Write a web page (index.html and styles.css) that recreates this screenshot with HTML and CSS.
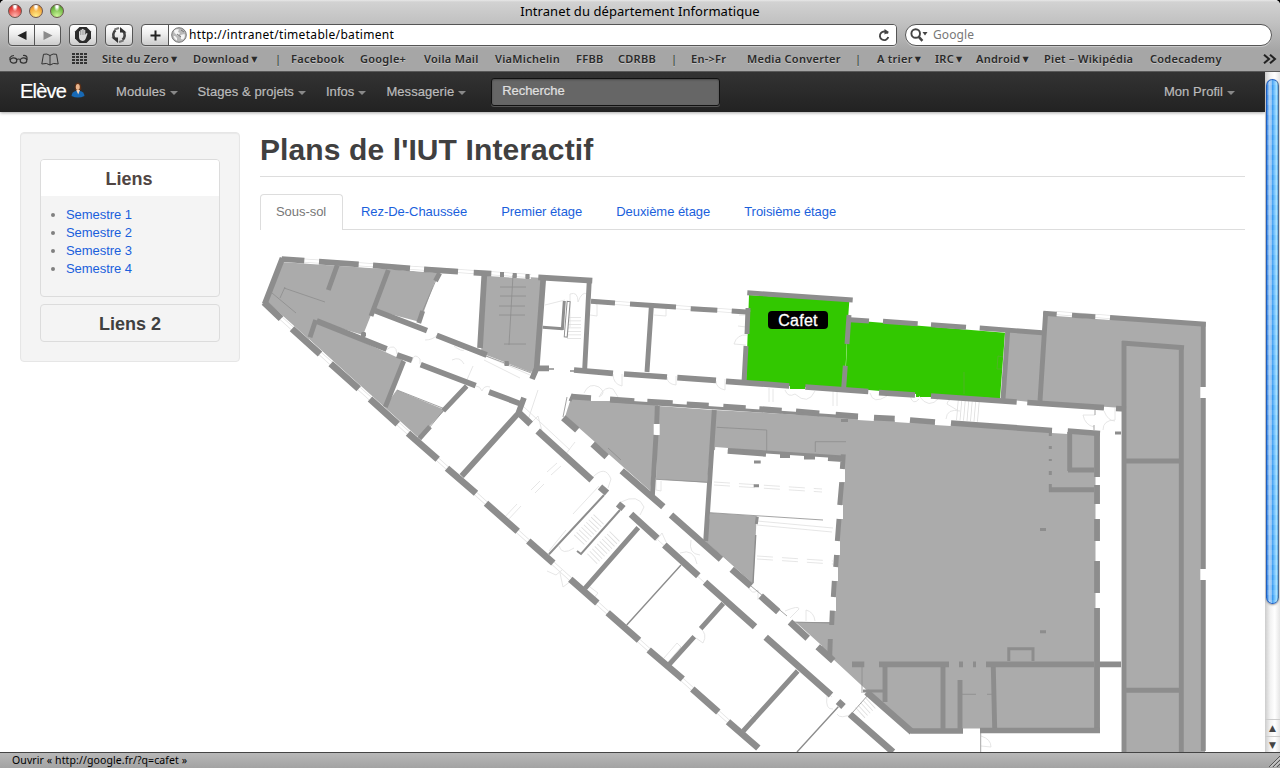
FILE: index.html
```html
<!DOCTYPE html>
<html lang="fr">
<head>
<meta charset="utf-8">
<title>Intranet du département Informatique</title>
<link rel="stylesheet" href="styles.css">
</head>
<body>
<div class="window">
<header class="chrome">
  <div class="titlebar">
    <div class="lights"><i class="light red"></i><i class="light amber"></i><i class="light green"></i></div>
    <div class="title"><span>Intranet du département Informatique</span></div>
  </div>
  <div class="toolbar">
    <div class="btn pair">
      <span><svg width="10" height="9"><path d="M9.500 0V9L0.500 4.500Z" fill="#222"/></svg></span>
      <span class="split"><svg width="10" height="9"><path d="M0.500 0V9L9.500 4.500Z" fill="#8b8b8b"/></svg></span>
    </div>
    <div class="btn single b1"><svg width="18" height="18" viewBox="0 0 18 18"><path d="M5.500 1h7L17 5.500v7L12.500 17h-7L1 12.500v-7z" fill="#2b2b2b"/><path d="M5 9V5.500q.8-1 1.400 0V4q.8-1 1.600 0v-.8q.9-1 1.700 0V4q.9-.8 1.600.2v4.600l1-1.600q1-.4 1.200.5L12 12q-1 3-3.500 3Q5 14.500 5 11z" fill="#d8d8d8"/><path d="M6.500 5v4M8.200 4v5M9.900 4v5" stroke="#777" stroke-width=".5"/></svg></div>
    <div class="btn single b2"><svg width="18" height="18" viewBox="0 0 18 18" fill="none" stroke="#444" stroke-width="2.600"><path d="M5.500 4.200A6 6 0 0 0 4.500 12.500M12.500 13.800A6 6 0 0 0 13.500 5.500"/><path d="M1.500 11.500h6.500v5.500zM16.500 6.500H10V1z" fill="#333" stroke="none"/><path d="M4.500 3.500L9 2M13.500 14.500L9 16" stroke="#777" stroke-width="2"/></svg></div>
    <div class="btn address">
      <span class="plus"><svg width="11" height="11"><path d="M5.500 .5v10M.5 5.500h10" stroke="#222" stroke-width="2"/></svg></span>
      <span class="url">
        <svg width="16" height="16" viewBox="0 0 16 16"><circle cx="8" cy="8" r="7.300" fill="#b9b9b9" stroke="#777"/><path d="M3 3.500q3-2 5-1L7 5l2 1-2 2.500L3.500 6zM9.500 8l4-1q1 3-1.500 5.500L10 12zM4 9l2 2v2.500Q3 12 2.500 9z" fill="#f5f5f5"/><path d="M10 3l3 2M6 7l4 3" stroke="#777"/></svg>
        <span class="urltext">http://intranet/timetable/batiment</span>
        <svg class="reload" width="12" height="13" viewBox="0 0 12 13"><path d="M9.800 4.500A4.300 4.300 0 1 0 10.300 8" fill="none" stroke="#444" stroke-width="1.900"/><path d="M6.500 0v5.500L11 3z" fill="#444"/></svg>
      </span>
    </div>
    <div class="search">
      <svg width="19" height="14" viewBox="0 0 19 14"><circle cx="5.700" cy="5.500" r="4.300" fill="none" stroke="#444" stroke-width="1.900"/><path d="M8.800 8.800l3.600 4" stroke="#444" stroke-width="2.500"/><path d="M12.500 4h5l-2.500 3.500z" fill="#444"/></svg>
      <span>Google</span>
    </div>
  </div>
  <nav class="bookmarks">
    <svg class="glasses" width="20" height="11" viewBox="0 0 20 11" fill="none" stroke="#333" stroke-width="1.200"><ellipse cx="4.500" cy="6.500" rx="3.300" ry="2.600"/><ellipse cx="14.500" cy="6.500" rx="3.300" ry="2.600"/><path d="M7.500 5.500q2-1 4 0M1 6V3.500q1.500-2 4-2M18 6V3.500q-.5-2.500-4-2"/></svg>
    <svg class="book" width="18" height="13" viewBox="0 0 18 13" fill="none" stroke="#333"><path d="M9 2.500Q6 .2 2.500 1.300L.8 11q5-1.600 8.200 1 3.200-2.600 8.200-1L15.500 1.300Q12 .2 9 2.500zV12"/></svg>
    <svg class="grid" width="16" height="12"><path d="M1.500 0v11M5.500 0v11M9.500 0v11M13.500 0v11" stroke="#333" stroke-width="3" stroke-dasharray="2 1"/></svg>
    <ul>
      <li>Site du Zero<b>▼</b></li><li>Download<b>▼</b></li><li class="bar">|</li><li>Facebook</li><li>Google+</li><li>Voila Mail</li><li>ViaMichelin</li><li>FFBB</li><li>CDRBB</li><li class="bar">|</li><li>En-&gt;Fr</li><li>Media Converter</li><li class="bar">|</li><li>A trier<b>▼</b></li><li>IRC<b>▼</b></li><li>Android<b>▼</b></li><li>Piet – Wikipédia</li><li>Codecademy</li>
    </ul>
    <svg class="more" width="14" height="10" viewBox="0 0 14 10" fill="none" stroke="#222" stroke-width="2"><path d="M1 .7L6 5 1 9.300M7 .7L12 5 7 9.300"/></svg>
  </nav>
</header>

<div class="viewport">
<div class="page">
  <nav class="navbar">
    <a class="brand">Elève</a>
    <svg class="avatar" width="14" height="16" viewBox="0 0 14 16"><path d="M4 8Q2.800 1 7 .5 11 1 10.200 8z" fill="#5b3018"/><ellipse cx="6.800" cy="5" rx="2" ry="3" fill="#e9b48c"/><path d="M.5 14Q1 9.500 5 9h4q4 .5 4.500 5Q7 17 .5 14z" fill="#1769b5"/><path d="M5.200 8l2 4.500L9 8z" fill="#f6d4bb"/></svg>
    <ul class="menu"><li>Modules</li><li>Stages &amp; projets</li><li>Infos</li><li>Messagerie</li></ul>
    <div class="query">Recherche</div>
    <ul class="menu right"><li>Mon Profil</li></ul>
  </nav>
  <div class="content">
    <aside class="well">
      <section class="box open"><h3>Liens</h3><ul><li>Semestre 1</li><li>Semestre 2</li><li>Semestre 3</li><li>Semestre 4</li></ul></section>
      <section class="box"><h3>Liens 2</h3></section>
    </aside>
    <main>
      <h1><span>Plans de l'IUT Interactif</span></h1>
      <ul class="tabs"><li class="active">Sous-sol</li><li>Rez-De-Chaussée</li><li>Premier étage</li><li>Deuxième étage</li><li>Troisième étage</li></ul>
      <svg class="plan" width="985" height="504" viewBox="260 248 985 504">
        <!-- closed rooms -->
        <g class="room">
          <path d="M282.700 261L388 269 371 315 363 335 316.700 321 309 340 265 303z"/>
          <path d="M388 269L438 273 420 322 375 310z"/>
          <path d="M316.700 321L403 360 385 409 309 339z"/>
          <path d="M396.700 390L445 410 419 437 408 433 384 408z"/>
          <path d="M486 274L542 278 536 371 530 372 481 353z"/>
          <path d="M571 398L658 405 650 495 565 417z"/>
          <path d="M658 406L713 410 707.300 482.700 656 479.300z"/>
          <path d="M714 410L858 418 1052 431 1100 434V733H913L793 622H831.700L843 457 714 450z"/>
          <path d="M710 512.700L756.700 516 753.300 584 706 542z"/>
          <path d="M1007 331L1043 334 1040 403 1003 399z"/>
          <path d="M1044 312L1205 324V752H1122V408L1038 402z"/>
        </g>
        <!-- window openings -->
        <path class="gap" d="M281 259L531 276M263 302L430 452M591 301.300L750 312.300M1056 313L1110 317M563 417.700L664 507M671 515L751 586 820 648M1203.300 387V398M1203.300 569V580M1098.500 477V485M1098.500 504V519M1098.500 541V561M1098.500 593V608M656.700 424V435M842 469V482M840 505V519M837 541V555M835 567V581M833 597V611M591 398H610M858 417L874 418M895 419L910 420M935 422L951 423M1052 430L1068 431M963 731.500H980M715 450L728 451M766 456H780M790 457H804M815 458H828"/>
        <g class="cafet"><path d="M749 295L849.300 301 848 320 844.500 388 805 387V389H790V386L746 382z"/><path d="M848 320L1005 332.700 1000 398.500 931 395V397H916V394L845 388z"/></g>
        <path class="casing" d="M281 259L531 276M263 302L758 748M591 301.300L750 312.300M1056 313L1110 317"/>
        <path class="clear" d="M281 259L531 276M263 302L758 748M591 301.300L750 312.300M1056 313L1110 317"/>
        <!-- doors, stairs and fittings -->
        <g class="faint">
          <path d="M524 407L570 450M575 442L565 455 550 440M658 540L705 583M723 597L755 626M765 637L832 697M538 390L528 420M473 366L466 382M486 356L530 375M484 360L520 378"/>
          <path d="M386 350q10-8 11 4M412 361q2-9 8-2l0 5M425 340q8 0 12-5M476 386q4 0 6 5 2-6 8-4M454 346q8 6 10 4M452 360q8-4 12 4M613 374q0 10 9 12V374M667 377q0 7 9 8V376M716 381q0 7 9 9V379M747 335q-10-1-13 9l12 1M570 327v-33q8-3 8 8 4-11 9-8M545 305l20-5"/>
          <path d="M584 393q5-11 15-6 8 6 0 10M599 397q6-12 14-8l5 8M785 390q3 8 10 4M795 394q13 12 20-3M870 393q3 12 17 3M910 396q3 10 9 3M919 396q10 14 20 2M961 398q-14 0-14 6l10 6M960 411q-13-3-14 8"/>
          <path d="M1095 415h-12q2 10 11 12M1115 408v12q-12 0-12 10M1104 411q4 10 11 10"/>
          <path d="M530 424l8-8 4 15M592 478q13-14 19 1l-3 9M621 502q17-9 23 5l-4 8M656 541l6-8 4 9M680 553q14-5 17 11M691 540q-3 14 9 15M748 586q4 10 10 4v10M785 611q14-6 14-2l-9 9M806 621v-11q8 2 9 11M700 628q8 6 3 15l-7-5M547 571l9 4 6-5M560 573l3 14 8-6M559 546q3 10 15 2M827 696q-2 14 6 13M837 714q3 6 17-1"/>
          <path d="M591 303l6 1v12l-7-1M654 307l12 1v8l-12-1M739 315h7v12l-8-1M656 480v10l5 1v-10M757 521l76 7M757 525l75 7M590 587l8 6-5 6M664 658l13-15 4 4-13 15M744 730l12-9-6-6M769 388v14M773 389v13M833 391v15M837 391v15"/>
          <path d="M503 519l14-15M507 521l14-15M531 490l9-9M535 493l9-9M547 472l10-9M551 475l10-9M549 551l8-10 9-11M573 514l26-28"/>
          <path d="M714 482l108 7M714 485l108 7M757 556l76 5M757 559l76 5" stroke-dasharray="16 9"/>
          <path d="M981 736q10 3 10 11l-10-1"/>
        </g>
        <path class="stairs wide" d="M574 317V339M579 540L600 518M592 559L616 535M860 713L872 702"/><path class="stairs tall" d="M957 410L980 412"/>
        <g class="detail">
          <path d="M272 293L296 313M284 288L325 302M280 298l5-11M513 275L509 345M500 287h26M500 296h26M499 306h26M499 315h26M504 344h22"/>
          <path d="M716.700 427.300L766.700 430V451M815.300 452V441.700H846M656 479.300l52 3M710 512.700L823 520M397 390l48 19M444 410l-20 24M418 322l18-42M486 356l48 18M962 694.300h14M987 694.300h6M862 667v26M868 695L853 712M980.700 733v19M608 448l13 12M567 397l-4 20M1095 410v5M1094 425v5M792 622l40 1M751 586l36 30"/>
          <path d="M549 369h5M570 371h5" stroke-width="1.500"/>
        </g>
        <path class="green-line" d="M964 372v22M1003 357l-5-1-1 13h5"/>
        <!-- load-bearing walls -->
        <g class="wall">
          <path d="M281.700 259L304.300 260.700M319 261.700L358.700 264.300M373 265.300L410 268.300M424 269.300L458 271.700M473.700 272.700L491.300 273.700M538.300 277.300L592.300 280.700M282.500 258L264.700 304"/>
          <path class="thick" d="M264 302.300L281 318.700M292 328.700L320 354M330.700 363.700L358.700 388.700M370 399L397.700 424M408 433.300L437.700 459.300M447 468.300L476 493.300M486 503.300L517.700 531.300M528.300 541L553.300 563M570.300 579.300L597.300 603M607.700 612.700L639 640.300M648.700 650L682.700 679M692.300 689L718.300 712M728 721.700L758.300 748"/>
          <path class="mid" d="M337.300 265L328.300 290M388.300 270L371 316M439.700 273L435.500 281M422.700 311L418.700 323M315.700 320L310 337.300M403.700 361L385.300 407M466.700 386L443.300 410.700M430 426.700L419.300 438.700"/>
          <path d="M375 310.700L427 330.700M436.700 335.300L486.700 355M316.700 321L386.700 349M397 355L412 360.300M420.700 364.700L475.700 385.700M489 392L519.300 403.300M524 397.700L518.300 413.300 461.700 476M484.300 275L480 348M543.300 278L536.700 368 532 379M537 368.300H549"/>
          <path class="mid" d="M589.300 280L584.700 369M651.300 307L647 372M748 308L747 334M746 346L744 382M849 315L847 344M845.300 365.700L843.700 388M1045.700 311.700L1040 401M1007.700 331L1003 399"/>
          <path class="mid" d="M591 301.300L615 303M630 304L676 307M690.700 308.700L717.300 310.300M731.700 311L750 312.300M747.300 292.700L852.700 300M850 319.700L869 321M883 321.300L917.700 323.700M931 324.700L966 327.300M979.700 328L1042.300 332.700M1043.300 313.300L1056.700 314.300M1072 315.200L1095.300 316.800M1110 317.500L1205.700 324.200"/>
          <path d="M574 370L613 373.300M624 374L667 377M677.300 377.700L716 380.300M726 381.300L789.300 386M805.300 387L868.300 391.500M879 392.700L915 395M931 396L1016.700 402M1027.300 402.500L1104 407.700M1116 408.500L1126 409"/>
          <path d="M571.700 396.700L591 398M610 399.300L634.300 401M647.300 401.700L672.700 403M686.700 404.300L708.700 405.700M723.300 406.700L745.700 408M759.300 409L781.700 410.700M796 411.300L819.300 413.300M835.700 414.700L858 416.300M874 417.700L894.700 418.700M910 420L935 422M951 423L1052 430.500M1067.700 431L1100 433.500"/>
          <path class="thin" d="M610 401L858 417.500M728 449.500L843 457M573 394L570 401M564.300 301L562.300 330M542.700 327.300L562.700 328.700"/>
          <path class="thick" d="M563.300 417.700L577.300 430M592.700 444L606.700 456.700M621.700 470.700L663.300 506.700M671 515L721 559.300M731.700 569.300L751 586M760.700 596L778.300 611.700M790 622L807.700 638.300M817.700 646.700L833.300 660.700M866.500 692L912 732M519.300 413.300L530.700 424"/>
          <path class="thick" d="M537.700 431L591.700 480M600 487L607 493M618 504L623.500 508.500M631 514.300L657.300 538.300M664.300 545L698.300 575.700M705 582.300L755 626.700M765.700 637.300L831 695M838 701.500L843.500 706.500M850 714.300L893 752"/>
          <path class="mid" d="M657.300 406L656.700 424M656 435L652.300 497M714.300 410L705.700 541M638.300 527.700L585 588.300M723.300 603.300L700.700 628.700M694.300 636.700L669.300 664.300M797.700 671L743.300 731"/>
          <path class="partition" d="M604 495L549 554.300M620 510L581 554 577 551"/>
          <path class="screen" d="M681 565L626.700 625M838.300 706.700L797 752M755.700 535L753 583"/>
          <path class="mid" d="M727.700 451.300L766 454.300M780 455.500H790M804 457H815M828 458.500L843 459.500M843.300 454.300L842.300 469M841.700 482.300L839.700 505M839 519L837.300 541M836.500 555L835.700 567M834.300 581L833.300 597M832.300 610.700L831.700 625M830.300 639L829.700 658"/>
          <path class="mid" d="M1203.300 322V387M1203.300 398V569M1203.300 580V751M1124 341V752M1181.300 346V752M1122 343L1184 347.700M1126 461H1179M1126 690.300H1179"/>
          <path d="M1097 433V477M1097 485V504M1097 519V541M1097 561V593M1097 608V733"/>
          <path class="mid" d="M1069.700 432V471M1068 470H1094M1049 489.700H1094M885 667V702M943 667V729M960 680V730M993.300 667L994.700 729"/>
          <path d="M852 664.300H864.300M879 664.300H949M959 664.300H963M973 664.300H976M986 664.300H1094M1099 664.300H1121M911 731H963M980 730.500H1100"/>
          <path class="thin" d="M1050.300 430V436M1050.300 446V449M1050.300 459V461M1050.300 471V475M1050.300 484V492M1008.800 661V648.700H1033V661M1040 631.700H1046M1040 529.500H1046M754 462H760.700M753.700 485.700H759M841 420.500H848M863 691H883M757.300 516.700L756.300 524M500 274.500H504M513 275.500H516.500M525.700 276.500H529.300M504.500 364H509M361 334.500H366M1115 433H1121"/>
          <path class="post" d="M502 272V277M514.700 273V278M527.500 274V279M506.700 361V366M363.500 332V337"/>
        </g>
        <path class="double" d="M568.700 301L565.700 337.500"/><path class="double inner" d="M568.600 302L565.700 336.500"/>
        <rect x="768" y="311" width="60" height="18" rx="4"/>
        <text x="798" y="326" text-anchor="middle">Cafet</text>
      </svg>
    </main>
  </div>
</div>
<div class="scroll"><div class="thumb"></div><div class="arrows"><span>▲</span><span>▼</span></div></div>
</div>
<footer class="status"><span>Ouvrir « http://google.fr/?q=cafet »</span><svg width="12" height="12"><path d="M1 12L12 1M5 12L12 5M9 12L12 9" stroke="#555"/><path d="M2.500 12L12 2.500M6.500 12L12 6.500" stroke="#ddd"/></svg></footer>
</div>
</body>
</html>
```
FILE: styles.css
```css
* { box-sizing: border-box; }
body { margin: 0; background: #000; font: 13px/18px "Liberation Sans", Arial, sans-serif; }
ul, h1, h3 { margin: 0; padding: 0; }
ul { list-style: none; }
svg { display: block; flex: none; }
.window { width: 1280px; height: 768px; display: flex; flex-direction: column; overflow: hidden; border-radius: 5px 5px 0 0; background: #fff; }

.chrome { height: 72px; flex: none; background: linear-gradient(#e8e8e8 0, #d2d2d2 2px, #c0c0c0 24px, #a6a6a6 50px, #a6a6a6 70px); border-bottom: 1px solid #585858; font-family: "Noto Sans", "Open Sans", sans-serif; }
.titlebar { height: 23px; display: flex; align-items: center; }
.lights { display: flex; gap: 7px; padding: 0 0 2px 8px; }
.light { width: 14px; height: 14px; border-radius: 50%; border: 1px solid #6b5550; }
.red { background: radial-gradient(ellipse at 50% 8%, #fff 0 12%, transparent 35%), radial-gradient(circle at 50% 90%, #ffb3ae, #e4423c 65%, #a51c1c); }
.amber { background: radial-gradient(ellipse at 50% 8%, #fff 0 12%, transparent 35%), radial-gradient(circle at 50% 90%, #ffee8a, #f3a63a 65%, #a9651c); }
.green { background: radial-gradient(ellipse at 50% 8%, #fff 0 12%, transparent 35%), radial-gradient(circle at 50% 90%, #cdf59a, #6fb843 65%, #38751e); }
.title { flex: 1; text-align: center; padding: 0 64px 2px 0; color: #000; font-size: 13px; letter-spacing: .07px; }
.toolbar { display: flex; height: 25px; padding: 1px 8px 0; }
.btn { height: 22px; border: 1px solid #555; border-radius: 4px; background: linear-gradient(#fff, #eee 45%, #ccc); display: flex; box-shadow: 0 1px 0 #c9c9c9; }
.btn > span { display: flex; align-items: center; justify-content: center; flex: 1; }
.pair { width: 53px; }
.btn .split { border-left: 1px solid #555; }
.single { width: 28px; align-items: center; justify-content: center; }
.b1, .b2 { margin-left: 8px; }
.address { width: 756px; margin-left: 8px; }
.btn > .plus { flex: 0 0 27px; border-right: 1px solid #555; }
.btn > .url { background: #fff; justify-content: flex-start; padding: 0 6px 0 2px; border-radius: 0 3px 3px 0; }
.urltext { margin-left: 2px; font-size: 12px; color: #000; letter-spacing: .32px; flex: 1; }
.search { width: 367px; height: 22px; margin-left: 8px; border: 1px solid #555; border-radius: 11px; background: #fff; display: flex; align-items: center; padding-left: 4px; color: #777; font-size: 12px; box-shadow: 0 1px 0 #c9c9c9; }
.search span { margin-left: 4px; letter-spacing: .1px; }
.bookmarks { height: 22px; display: flex; align-items: center; padding: 0 3px 0 9px; font-size: 11px; font-weight: 600; color: #2a2a2a; text-shadow: 0 1px 0 #c6c6c6; letter-spacing: .27px; }
.book { margin-left: 12px; }
.grid { margin-left: 13px; }
.bookmarks ul { margin-left: 14px; width: 1161px; display: grid; white-space: nowrap; grid-template-columns: 91px 82px 16px 69px 64px 71px 81px 42px 53px 20px 56px 108px 22px 58px 41px 68px 106px 72px; }
.bookmarks b { font: 8px "DejaVu Sans", sans-serif; position: relative; top: -1px; letter-spacing: 0; margin-left: 2px; }
.bookmarks .bar { font-weight: 400; }

.viewport { flex: 1; min-height: 0; display: flex; }
.page { width: 1265px; overflow: hidden; }
.navbar { height: 40px; display: flex; align-items: center; background: linear-gradient(#333, #222); box-shadow: 0 1px 3px rgba(0,0,0,.35); padding: 0 30px 0 20px; color: #bbb; letter-spacing: .06px; -webkit-text-stroke: .2px; }
.brand { width: 50px; color: #fff; font-size: 20px; letter-spacing: -.8px; position: relative; top: -1px; }
.avatar { margin: -4px 31px 0 1px; }
.menu { display: flex; gap: 20px; }
.menu li { display: flex; align-items: center; white-space: nowrap; }
.menu li::after { content: ""; margin-left: 4px; margin-top: 1px; border: 4px solid transparent; border-top-color: #888; border-bottom: 0; }
.query { width: 229px; height: 28px; margin: -1px 0 0 25px; padding: 3px 10px; border: 1px solid #111; border-radius: 3px; background: #666; color: #e0e0e0; box-shadow: inset 0 1px 2px rgba(0,0,0,.3), 0 1px 0 #555; letter-spacing: -.05px; }
.right { margin-left: auto; }
.content { display: flex; gap: 20px; padding: 20px 20px 0; }
.well { width: 220px; height: 230px; flex: none; padding: 26px 19px; border: 1px solid #e6e6e6; border-radius: 4px; background: #f4f4f4; box-shadow: inset 0 1px 1px rgba(0,0,0,.05); }
.box { border: 1px solid #dcdcdc; border-radius: 4px; height: 38px; margin-bottom: 7px; color: #404040; }
.box h3 { font-size: 18px; line-height: 38px; text-align: center; }
.box.open { height: 138px; }
.open h3 { background: #fff; height: 36px; border-radius: 3px 3px 0 0; padding-right: 2px; color: #504543; }
.open ul { list-style: disc; padding: 10px 0 0 25px; letter-spacing: -.05px; }
.open li { color: #808080; }
.box li::first-line { color: #1a5fdc; }
main { width: 985px; }
h1 { height: 45px; color: #404040; font-size: 30px; line-height: 36px; border-bottom: 1px solid #ddd; letter-spacing: .11px; }
.tabs { display: flex; height: 36px; margin: 17px 0 18px; border-bottom: 1px solid #ddd; color: #1a5fdc; gap: 2px; letter-spacing: -.05px; }
.tabs li { height: 36px; padding: 9px 16px; white-space: nowrap; }
.tabs .active { width: 83px; color: #777; border: 1px solid #ddd; border-bottom: 0; border-radius: 4px 4px 0 0; background: #fff; padding: 8px 15px; }

.plan path { fill: none; }
.plan .room path { fill: #ababab; }
.plan .cafet path { fill: #32c800; }
.gap { stroke: #fff; stroke-width: 6; }
.casing { stroke: #e3e3e3; stroke-width: 4; }
.clear { stroke: #fff; stroke-width: 2.500; }
.faint { stroke: #e0e0e0; stroke-width: .8; }
.detail { stroke: #8d8d8d; stroke-width: .8; }
.stairs { stroke: #ddd; stroke-width: .7; }
.wide { stroke-width: 14; stroke-dasharray: .8 2.700; }
.tall { stroke-width: 20; stroke-dasharray: .8 2.700; }
.green-line { stroke: #55ae2f; stroke-width: .8; }
.wall { stroke: #8d8d8d; stroke-width: 5.700; }
.wall .thick { stroke-width: 6.700; }
.wall .mid { stroke-width: 4.900; }
.wall .thin { stroke-width: 3; }
.wall .post { stroke-width: 4; }
.wall .partition { stroke-width: 2; }
.wall .screen { stroke-width: 1.400; }
.double { stroke: #8d8d8d; stroke-width: 4; }
.double.inner { stroke: #fff; stroke-width: 2; }
.plan text { fill: #fff; font-size: 16px; letter-spacing: .3px; stroke: #fff; stroke-width: .3px; }

.scroll { width: 15px; display: flex; flex-direction: column; justify-content: space-between; background: linear-gradient(90deg, #ccc, #f2f2f2 35%, #fff 65%, #e5e5e5); padding-top: 7px; }
.thumb { width: 13px; margin-left: 1px; height: 525px; border: 1px solid #205fc0; border-right-color: #4a6d94; border-radius: 7px; background: repeating-linear-gradient(rgba(255,255,255,.1) 0 5px, transparent 5px 10px), linear-gradient(90deg, #247be2, #a9d0f6 20%, #91c5f6 40%, #3c9cf1 50%, #74c4ff 70%, #a8e4ff 90%, #3d91db); box-shadow: 0 1px 2px #999; }
.arrows { height: 33px; display: flex; flex-direction: column; border-top: 1px solid #ccc; font: 9px/16px "DejaVu Sans", sans-serif; color: #444; text-align: center; }
.arrows span + span { border-top: 1px solid #ccc; }
.status { height: 16px; flex: none; border-top: 1px solid #444; background: linear-gradient(#b8b8b8, #a3a3a3); display: flex; align-items: center; justify-content: space-between; padding-left: 12px; font: 10.500px/14px "Noto Sans", sans-serif; letter-spacing: .1px; color: #000; }
.status span { margin-top: -1px; }
```
